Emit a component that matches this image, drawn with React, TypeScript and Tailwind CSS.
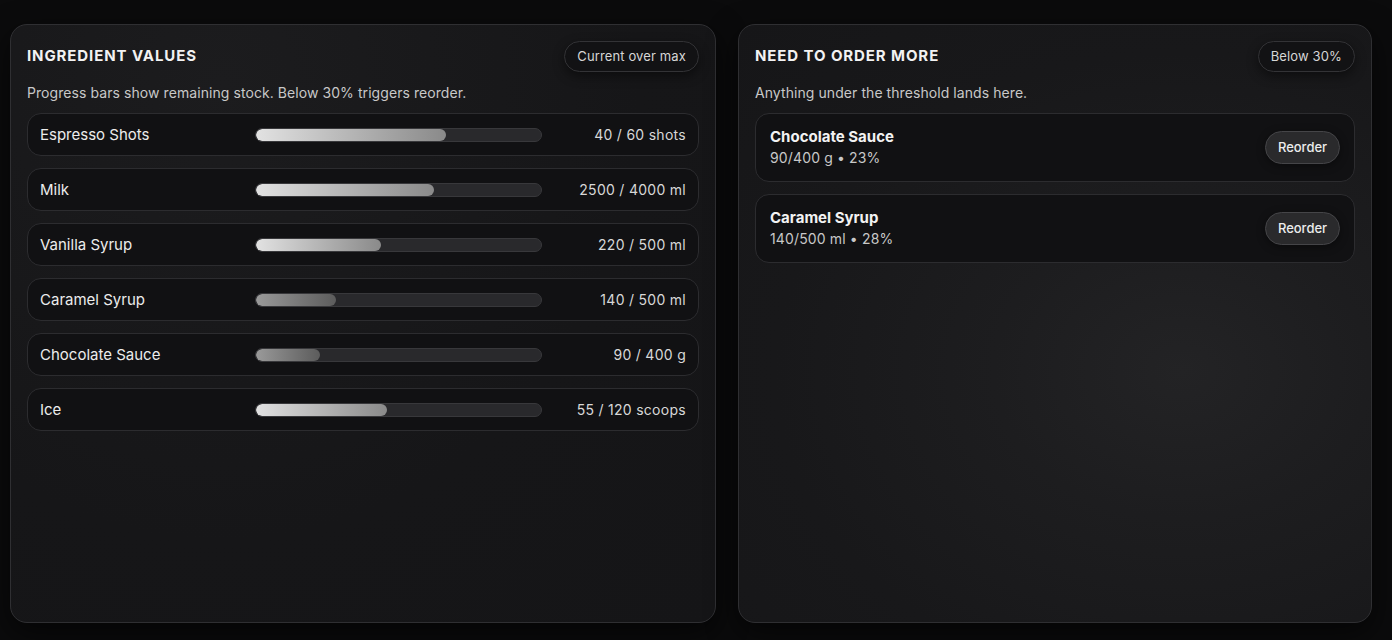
import React from "react";

const items = [
  { name: "Espresso Shots", cur: 40, max: 60, unit: "shots" },
  { name: "Milk", cur: 2500, max: 4000, unit: "ml" },
  { name: "Vanilla Syrup", cur: 220, max: 500, unit: "ml" },
  { name: "Caramel Syrup", cur: 140, max: 500, unit: "ml" },
  { name: "Chocolate Sauce", cur: 90, max: 400, unit: "g" },
  { name: "Ice", cur: 55, max: 120, unit: "scoops" },
];

const reorder = [
  { name: "Chocolate Sauce", sub: "90/400 g • 23%" },
  { name: "Caramel Syrup", sub: "140/500 ml • 28%" },
];

function Badge({ children }: { children: React.ReactNode }) {
  return (
    <div className="h-[31px] px-[12px] rounded-full border border-[#333336] bg-[#121214] text-[13px] text-[#d6d6d6] flex items-center shadow-[0_4px_12px_rgba(0,0,0,0.45)] tracking-[0.01em]">
      {children}
    </div>
  );
}

export default function App() {
  return (
    <div
      className="w-[1392px] h-[640px] bg-[#0b0b0c] pt-[24px] px-[10px] flex gap-[22px] text-white"
      style={{ fontFamily: "Inter, 'Noto Sans', sans-serif" }}
    >
      <section className="w-[706px] h-[599px] rounded-[17px] border border-[#2f2f32] bg-[radial-gradient(ellipse_at_30%_10%,#1c1c1e_0%,#161618_60%,#151517_100%)] shadow-[0_10px_30px_rgba(0,0,0,0.6)] px-[16px] pt-[16px]">
        <div className="flex items-center justify-between">
          <h2 className="text-[15px] font-bold tracking-[0.06em] text-[#f2f2f2]">INGREDIENT VALUES</h2>
          <Badge>Current over max</Badge>
        </div>
        <p className="mt-[10px] text-[14px] text-[#c8c8c8] tracking-[0.005em]">
          Progress bars show remaining stock. Below 30% triggers reorder.
        </p>
        <div className="mt-[10px] flex flex-col gap-[12px]">
          {items.map((it) => {
            const pct = (it.cur / it.max) * 100;
            const low = pct < 30;
            return (
              <div
                key={it.name}
                className="h-[43px] rounded-[14px] border border-[#2c2c2f] bg-[#111113] grid grid-cols-[215px_287px_1fr] items-center px-[12px]"
              >
                <span className="text-[15px] text-[#ececec] leading-[20px] mt-[1px]">{it.name}</span>
                <div className="h-[14px] rounded-full bg-[#29292c] border border-[#38383b] overflow-hidden">
                  <div
                    className={
                      low
                        ? "h-full rounded-full bg-gradient-to-r from-[#9a9a9a] to-[#5c5c5c]"
                        : "h-full rounded-full bg-gradient-to-r from-[#e2e2e2] to-[#8a8a8a]"
                    }
                    style={{ width: `${pct}%` }}
                  />
                </div>
                <span className="text-right text-[14px] text-[#d8d8d8] tracking-[0.02em] leading-[20px] mt-[1px]">
                  {it.cur} / {it.max} {it.unit}
                </span>
              </div>
            );
          })}
        </div>
      </section>

      <section className="w-[634px] h-[599px] rounded-[17px] border border-[#2f2f32] bg-[radial-gradient(ellipse_at_70%_58%,#232325_0%,#1d1d1f_30%,#18181a_65%,#161618_100%)] shadow-[0_10px_30px_rgba(0,0,0,0.6)] px-[16px] pt-[16px]">
        <div className="flex items-center justify-between">
          <h2 className="text-[15px] font-bold tracking-[0.06em] text-[#f2f2f2]">NEED TO ORDER MORE</h2>
          <Badge>Below 30%</Badge>
        </div>
        <p className="mt-[10px] text-[14px] text-[#c8c8c8] tracking-[0.005em]">
          Anything under the threshold lands here.
        </p>
        <div className="mt-[10px] flex flex-col gap-[12px]">
          {reorder.map((r) => (
            <div
              key={r.name}
              className="h-[69px] rounded-[14px] border border-[#2c2c2f] bg-[#111113] flex items-center justify-between pl-[14px] pr-[14px]"
            >
              <div className="flex flex-col">
                <span className="text-[15px] font-bold text-[#f2f2f2] leading-[20px]">{r.name}</span>
                <span className="text-[14px] text-[#c8c8c8] leading-[20px] mt-[1px] tracking-[0.01em]">{r.sub}</span>
              </div>
              <button className="h-[33px] w-[75px] rounded-full bg-[#2a2a2c] border border-[#454548] text-[13px] font-medium text-[#ececec] shadow-[0_2px_8px_rgba(0,0,0,0.4)]">
                Reorder
              </button>
            </div>
          ))}
        </div>
      </section>
    </div>
  );
}
